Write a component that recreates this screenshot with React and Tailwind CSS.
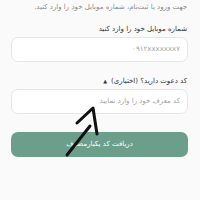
import React from 'react';

const FONT = { fontFamily: '"DejaVu Sans", "Noto Sans", sans-serif' };

function Field({ placeholder, ltr }) {
  return (
    <div className="h-[25px] rounded-[7px] border border-[#e6e6e6] bg-white flex items-center px-[7px] justify-start">
      <span
        dir={ltr ? 'ltr' : 'rtl'}
        className="text-[7px] text-[#a3a3a3] leading-none"
      >
        {placeholder}
      </span>
    </div>
  );
}

export default function App() {
  return (
    <div dir="rtl" style={FONT} className="relative w-[200px] h-[200px] bg-[#fafafa] overflow-hidden">
      <div className="flex flex-col pr-[12px] pl-[11px] pt-[2px]">
        <p className="text-[7px] text-[#8a8a8a] leading-[10px] pr-[1px]">
          جهت ورود یا ثبت‌نام، شماره موبایل خود را وارد کنید.
        </p>

        <p className="mt-[12px] text-[7px] font-medium text-[#333] leading-[10px] pr-[1px]">
          شماره موبایل خود را وارد کنید
        </p>
        <div className="mt-[3px]">
          <Field placeholder="۰۹۱۲xxxxxxx۷" ltr />
        </div>

        <div className="mt-[14px] flex items-center gap-[4px] pr-[1px]">
          <span className="text-[7px] text-[#333] leading-[10px]">کد دعوت دارید؟ (اختیاری)</span>
          <span className="text-[5px] text-[#333] leading-none">▲</span>
        </div>
        <div className="mt-[3px]">
          <Field placeholder="کد معرف خود را وارد نمایید" />
        </div>

        <button className="mt-[18px] h-[25px] rounded-[7px] bg-[#6b9f8c] text-white text-[7px] flex items-center justify-center">
          دریافت کد یکبارمصرف
        </button>
      </div>

      <svg className="absolute left-0 top-0 pointer-events-none" width="200" height="200" viewBox="0 0 200 200">
        <path
          d="M67 155 L90 126 M77 123 L93 108 L97 134"
          fill="none"
          stroke="#111"
          strokeWidth="3"
          strokeLinecap="round"
          strokeLinejoin="round"
        />
      </svg>
    </div>
  );
}
